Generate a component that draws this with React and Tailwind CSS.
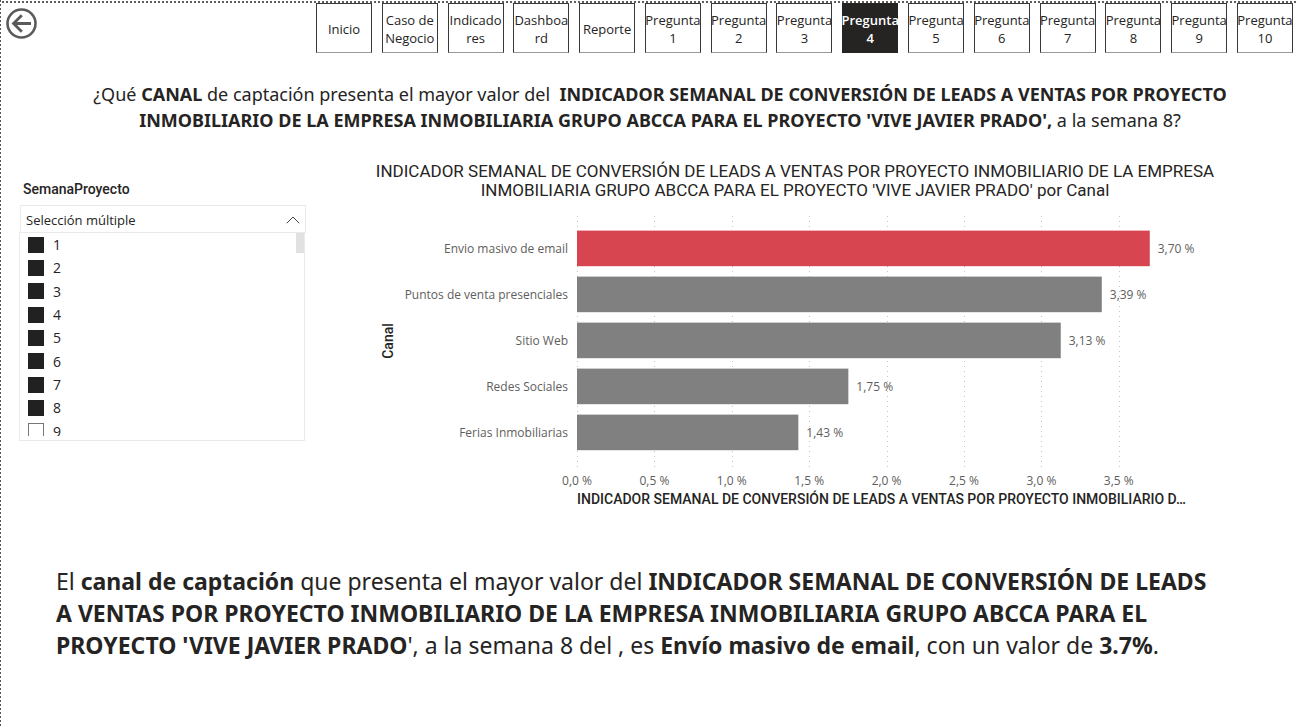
const pages = [
  'Inicio',
  'Caso de Negocio',
  'Indicado res',
  'Dashboa rd',
  'Reporte',
  'Pregunta 1',
  'Pregunta 2',
  'Pregunta 3',
  'Pregunta 4',
  'Pregunta 5',
  'Pregunta 6',
  'Pregunta 7',
  'Pregunta 8',
  'Pregunta 9',
  'Pregunta 10',
];

const weeks = [1, 2, 3, 4, 5, 6, 7, 8, 9];

const channels = [
  { name: 'Envio masivo de email', value: 3.7, label: '3,70 %', color: '#d64550' },
  { name: 'Puntos de venta presenciales', value: 3.39, label: '3,39 %', color: '#808080' },
  { name: 'Sitio Web', value: 3.125, label: '3,13 %', color: '#808080' },
  { name: 'Redes Sociales', value: 1.753, label: '1,75 %', color: '#808080' },
  { name: 'Ferias Inmobiliarias', value: 1.43, label: '1,43 %', color: '#808080' },
];

const ticks = ['0,0 %', '0,5 %', '1,0 %', '1,5 %', '2,0 %', '2,5 %', '3,0 %', '3,5 %'];

const STEP = 77.4;
const X0 = 202;

function BackButton() {
  return (
    <button type="button" aria-label="Volver" className="ml-[5px] mt-[5px] size-[31px] shrink-0">
      <svg viewBox="0 0 31 31" className="size-full" fill="none" stroke="#5c5a58">
        <circle cx="15.5" cy="15.5" r="14" strokeWidth="2.6" />
        <path d="M25 15.5H7.5M15.8 7.2L7.5 15.5l8.3 8.3" strokeWidth="2.8" />
      </svg>
    </button>
  );
}

function PageNav() {
  return (
    <nav className="flex flex-1 justify-between pl-[279px] pr-[5px]">
      {pages.map((p) => {
        const active = p === 'Pregunta 4';
        return (
          <button
            key={p}
            type="button"
            className={
              active
                ? 'flex h-[50px] w-14 items-center justify-center border border-[#252423] bg-[#252423] pt-[2px] text-[13px] font-semibold leading-[18px] text-white'
                : 'flex h-[50px] w-14 items-center justify-center border border-[#3a3938] border-b-[#999] bg-white pt-[2px] text-[13px] leading-[18px]'
            }
          >
            <span className="w-[50px] shrink-0 text-center">
              {p.split(' ').length === 3 ? (
                <>
                  Caso de
                  <br />
                  Negocio
                </>
              ) : (
                p.split(' ').map((w) => (
                  <span key={w} className="flex justify-center">
                    {w}
                  </span>
                ))
              )}
            </span>
          </button>
        );
      })}
    </nav>
  );
}

function WeekSlicer() {
  return (
    <section className="w-[287px] shrink-0 pt-[17px]">
      <h2 className="pl-1 font-['Roboto',sans-serif] text-[14px] font-medium leading-5">SemanaProyecto</h2>
      <button
        type="button"
        aria-expanded="true"
        className="ml-px mt-[6px] flex h-[28px] w-[286px] items-center justify-between border border-[#eaeaea] pl-[5px] pr-[5px] pt-[2px] text-[13px] leading-[18px]"
      >
        Selección múltiple
        <svg width="14" height="8" viewBox="0 0 14 8" fill="none" stroke="#444" strokeWidth="1">
          <path d="M0.8 7.2L7 1l6.2 6.2" />
        </svg>
      </button>
      <div className="relative -mt-px h-[209px] w-[286px] border border-[#eaeaea]">
        <div className="h-[203px] overflow-hidden">
          <ul className="grid h-[210px] auto-rows-fr">
            {weeks.map((w) => (
              <li key={w} className="flex items-center pl-2">
                <label className="flex items-center gap-[9px] text-[14px] leading-5">
                  <input
                    type="checkbox"
                    defaultChecked={w !== 9}
                    className="size-4 appearance-none border border-[#777] bg-white checked:border-[#212121] checked:bg-[#212121]"
                  />
                  <span className="pt-px">{w}</span>
                </label>
              </li>
            ))}
          </ul>
        </div>
        <span className="absolute right-0 top-0 h-5 w-2 bg-[#e1e1e1]" />
      </div>
    </section>
  );
}

function ChannelChart() {
  return (
    <figure className="flex flex-col items-center">
      <figcaption className="text-center font-['Roboto',sans-serif] text-[17px] font-normal leading-[19px]">
        INDICADOR SEMANAL DE CONVERSIÓN DE LEADS A VENTAS POR PROYECTO INMOBILIARIO DE LA EMPRESA
        <br />
        INMOBILIARIA GRUPO ABCCA PARA EL PROYECTO 'VIVE JAVIER PRADO' por Canal
      </figcaption>
      <svg width="840" height="316" viewBox="0 0 840 316" className="block">
        {ticks.map((t, i) => (
          <g key={t}>
            <line
              x1={Math.round(X0 + i * STEP) + 0.5}
              x2={Math.round(X0 + i * STEP) + 0.5}
              y1="16"
              y2="271"
              stroke="#c4c4c4"
              strokeDasharray="1 4"
            />
            <text x={X0 + i * STEP} y="285" textAnchor="middle" fontSize="12" fill="#605e5c">
              {t}
            </text>
          </g>
        ))}
        {channels.map((c, i) => {
          const w = (c.value / 0.5) * STEP;
          return (
            <g key={c.name} fontSize="12" fill="#605e5c">
              <rect x={X0} y={30.6 + i * 46} width={w} height="35.6" fill={c.color} />
              <text x={X0 - 9} y={53 + i * 46} textAnchor="end">
                {c.name}
              </text>
              <text x={X0 + w + 8} y={53 + i * 46}>
                {c.label}
              </text>
            </g>
          );
        })}
        <text
          transform="translate(18 141) rotate(-90)"
          textAnchor="middle"
          fontSize="14"
          fill="#252423"
          className="font-['Roboto',sans-serif] font-medium"
        >
          Canal
        </text>
        <text x={X0} y="304" fontSize="14" fill="#252423" className="font-['Roboto',sans-serif] font-medium">
          INDICADOR SEMANAL DE CONVERSIÓN DE LEADS A VENTAS POR PROYECTO INMOBILIARIO D…
        </text>
      </svg>
    </figure>
  );
}

export default function App() {
  return (
    <div className="flex min-h-screen bg-white font-['Open_Sans',sans-serif] text-[#252423]">
      <div className="w-px shrink-0 bg-[repeating-linear-gradient(to_bottom,#555_0_2px,#fff_2px_4px)]" />
      <div className="min-w-0 flex-1">
        <div className="mt-px h-[2px] bg-[repeating-linear-gradient(to_right,#fff_0_1px,#605e5c_1px_3px,#fff_3px_4px)]" />
        <header className="flex items-start">
          <BackButton />
          <PageNav />
        </header>
        <main>
          <h1 className="mt-7 pl-[21px] text-center font-['Noto_Sans',sans-serif] text-[18px] font-normal leading-[26px]">
            ¿Qué <b>CANAL</b> de captación presenta el mayor valor del{' '}
            <b>&nbsp;INDICADOR SEMANAL DE CONVERSIÓN DE LEADS A VENTAS POR PROYECTO</b>
            <br />
            <b>INMOBILIARIO DE LA EMPRESA INMOBILIARIA GRUPO ABCCA PARA EL PROYECTO 'VIVE JAVIER PRADO',</b> a la
            semana 8?
          </h1>
          <div className="mt-[29px] flex items-start pl-[18px]">
            <WeekSlicer />
            <div className="ml-[69px]">
              <ChannelChart />
            </div>
          </div>
          <p className="mt-[49px] pl-[55px] font-['Noto_Sans',sans-serif] text-[23px] leading-[32px]">
            El <b>canal de captación</b> que presenta el mayor valor del{' '}
            <b>
              INDICADOR SEMANAL DE CONVERSIÓN DE LEADS
              <br />
              A VENTAS POR PROYECTO INMOBILIARIO DE LA EMPRESA INMOBILIARIA GRUPO ABCCA PARA EL
              <br />
              PROYECTO 'VIVE JAVIER PRADO
            </b>
            ', a la semana 8 del , es <b>Envío masivo de email</b>, con un valor de <b>3.7%</b>.
          </p>
        </main>
      </div>
    </div>
  );
}
